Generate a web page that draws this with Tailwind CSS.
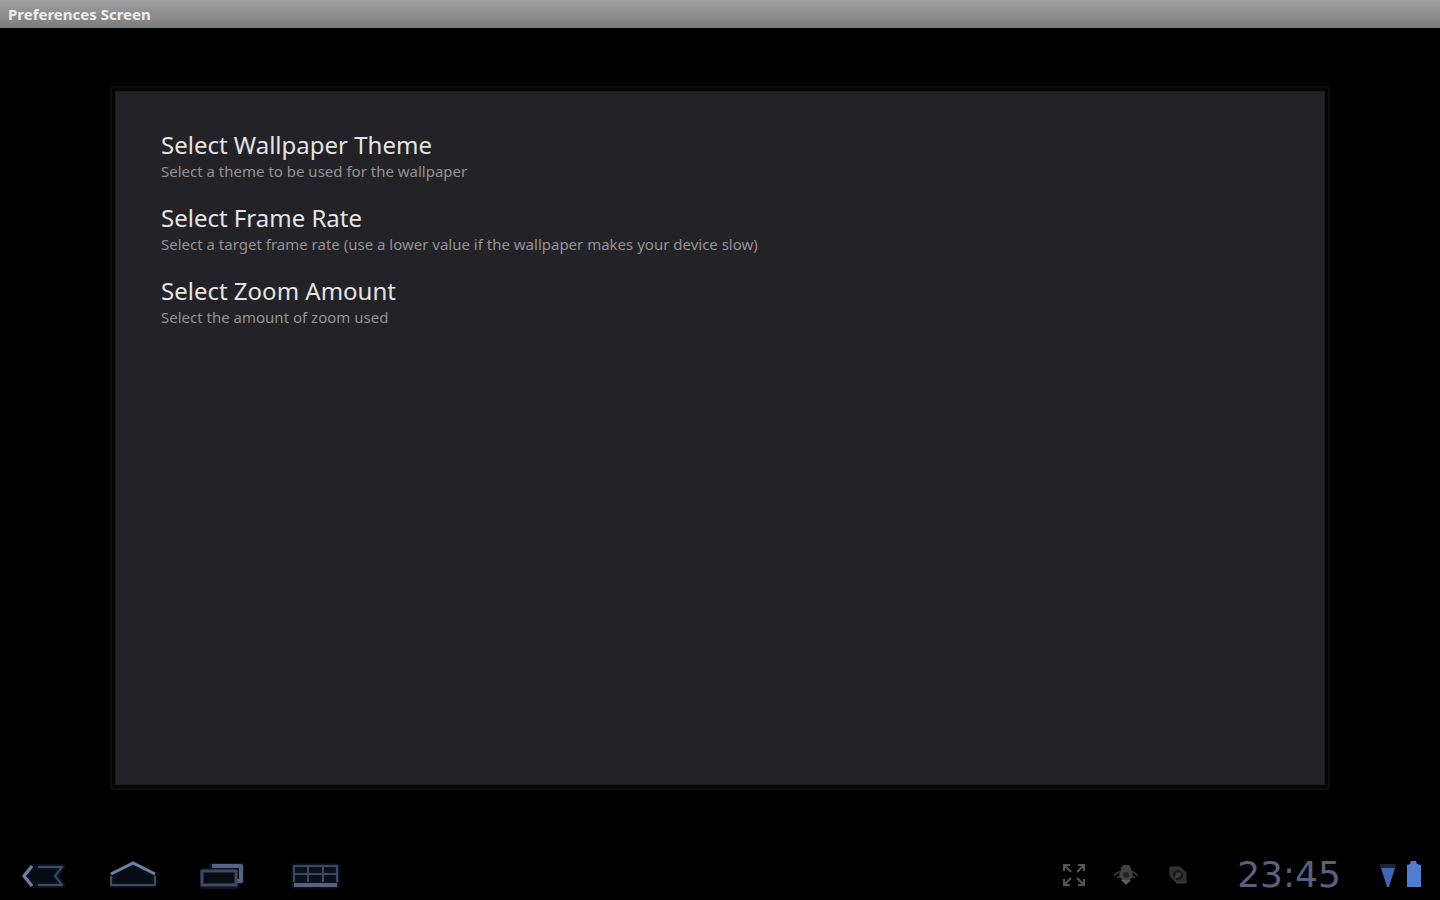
<!DOCTYPE html>
<html lang="en">
<head>
    <meta charset="UTF-8">
    <meta name="viewport" content="width=device-width, initial-scale=1.0">
    <title>Preferences Screen</title>
    <script src="https://cdn.jsdelivr.net/npm/@tailwindcss/browser@4"></script>
</head>
<body class="bg-black font-['Noto_Sans','Open_Sans',sans-serif]">
    <div class="min-h-screen flex flex-col">
        <header class="h-7 px-2 flex items-center bg-linear-to-b from-[#a0a0a0] to-[#7c7c7c]">
            <h1 class="text-[15px] leading-5 font-bold text-[#ececec]">Preferences Screen</h1>
        </header>

        <main class="grow flex px-[110px] pt-[58px] pb-[60px]">
            <div class="grow flex border-2 border-[#0e0e0f] rounded-xs p-[3px] bg-[#050506]">
                <ul class="grow bg-[#232227] border border-[#1b1a1e] px-[45px] pt-[37px]">
                    <li class="h-[73px]">
                        <button type="button" class="block w-full text-left">
                            <span class="block text-[24px] leading-8 text-[#e4e4e4]">Select Wallpaper Theme</span>
                            <span class="block text-[15px] leading-5 text-[#929295]">Select a theme to be used for the wallpaper</span>
                        </button>
                    </li>
                    <li class="h-[73px]">
                        <button type="button" class="block w-full text-left">
                            <span class="block text-[24px] leading-8 text-[#e4e4e4]">Select Frame Rate</span>
                            <span class="block text-[15px] leading-5 text-[#929295]">Select a target frame rate (use a lower value if the wallpaper makes your device slow)</span>
                        </button>
                    </li>
                    <li class="h-[73px]">
                        <button type="button" class="block w-full text-left">
                            <span class="block text-[24px] leading-8 text-[#e4e4e4]">Select Zoom Amount</span>
                            <span class="block text-[15px] leading-5 text-[#929295]">Select the amount of zoom used</span>
                        </button>
                    </li>
                </ul>
            </div>
        </main>

        <!-- System bar -->
        <footer class="h-[50px] flex items-center justify-between pl-5 pr-[18px]">
            <nav class="flex items-center gap-11">
                <button type="button" aria-label="Back">
                    <svg class="w-[46px] h-9" viewBox="0 0 46 36" fill="none" stroke-linejoin="round">
                        <path d="M13 10H42L36 19L42 28H13L4 19Z" fill="#070c14" stroke="#0a1322" stroke-width="6"/>
                        <path d="M18 10H42L35 19L42 28H18" stroke="#444b61" stroke-width="2"/>
                        <path d="M12 9L4 19L12 29" stroke="#7080a3" stroke-width="3"/>
                    </svg>
                </button>
                <button type="button" aria-label="Home">
                    <svg class="w-[46px] h-9" viewBox="0 0 46 36" fill="none" stroke-linejoin="round">
                        <path d="M2 17L23 6L44 17V28H2Z" fill="#070c14" stroke="#0a1322" stroke-width="5"/>
                        <path d="M1 19V28H45V19" stroke="#444a60" stroke-width="2"/>
                        <path d="M1 17L23 6L45 17" stroke="#7080a3" stroke-width="3"/>
                    </svg>
                </button>
                <button type="button" aria-label="Recent apps">
                    <svg class="w-[46px] h-9" viewBox="0 0 46 36" fill="none" stroke-linejoin="round">
                        <path d="M12 9H41V24H36V29H3V14H12Z" fill="#0a1322" stroke="#0a1322" stroke-width="6"/>
                        <path d="M12 9H41V24H37" stroke="#56627f" stroke-width="4"/>
                        <rect x="2" y="14" width="34" height="14" fill="#070c13" stroke="#414960" stroke-width="3"/>
                    </svg>
                </button>
                <button type="button" aria-label="Screen layout">
                    <svg class="w-[46px] h-9" viewBox="0 0 46 36" fill="none" stroke-linejoin="round" overflow="visible">
                        <rect x="4" y="9" width="43" height="20" fill="#08101c" stroke="#0a1322" stroke-width="5"/>
                        <path d="M4 25V9H47V25M18 9V25M33 9V25M4 17H47" stroke="#3e475d" stroke-width="2"/>
                        <path d="M4 28H47" stroke="#56627f" stroke-width="4"/>
                    </svg>
                </button>
            </nav>

            <div class="flex items-center">
                <div class="flex items-center gap-7">
                    <svg class="w-6 h-6" viewBox="0 0 24 24" fill="none" stroke="#565656" stroke-width="2">
                        <path d="M2 8V2H8M3 3L9 9M16 2H22V8M21 3L15 9M2 16V22H8M3 21L9 15M16 22H22V16M21 21L15 15"/>
                    </svg>
                    <svg class="w-6 h-6" viewBox="0 0 24 24" fill="none">
                        <path d="M8 8L3 10L0 13M16 8L21 10L24 13M7 14L3 14M17 14H21" stroke="#323232" stroke-width="2"/>
                        <path d="M9 2H15L17 5V8L19 12L16 17H8L5 12L7 8V5Z" fill="#424242"/>
                        <circle cx="12" cy="12" r="3" fill="#242424"/>
                        <path d="M7 17H17L12 22Z" fill="#5a5a5a"/>
                    </svg>
                    <svg class="w-6 h-6" viewBox="0 0 24 24" fill="none">
                        <path d="M4 4H14L20 10V20H11L4 13Z" fill="#303030" stroke="#3a3a3a" stroke-width="1"/>
                        <circle cx="12" cy="12" r="4" stroke="#161616" stroke-width="2"/>
                        <path d="M14 10L9 15" stroke="#444444" stroke-width="2"/>
                    </svg>
                </div>
                <time class="ml-5 w-[158px] text-center font-['DejaVu_Sans',sans-serif] text-[36px] leading-[50px] text-[#596180]">23:45</time>
                <div class="ml-3 flex items-center gap-[10px]">
                    <svg class="w-4 h-7" viewBox="0 0 16 28">
                        <path d="M0 3H16L15 8H1Z" fill="#20242f"/>
                        <path d="M1 7H15L9 26H7Z" fill="#3f66b5"/>
                    </svg>
                    <svg class="w-4 h-7" viewBox="0 0 16 28">
                        <path d="M5 0H10L11 3L15 4V26H1V4L4 3Z" fill="#4f7dd3"/>
                    </svg>
                </div>
            </div>
        </footer>
    </div>
</body>
</html>
